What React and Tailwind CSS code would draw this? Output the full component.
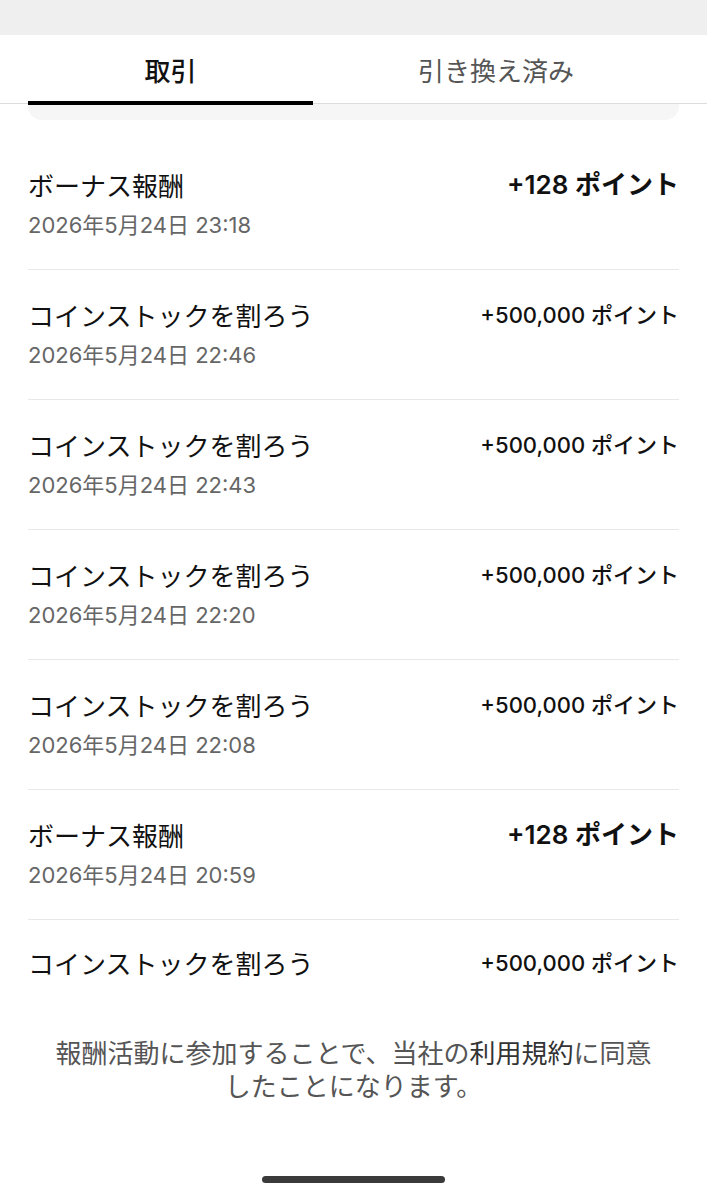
export default function App() {
  const rows = [
    { t: "ボーナス報酬", d: "2026年5月24日 23:18", a: "+128 ポイント", big: true },
    { t: "コインストックを割ろう", d: "2026年5月24日 22:46", a: "+500,000 ポイント" },
    { t: "コインストックを割ろう", d: "2026年5月24日 22:43", a: "+500,000 ポイント" },
    { t: "コインストックを割ろう", d: "2026年5月24日 22:20", a: "+500,000 ポイント" },
    { t: "コインストックを割ろう", d: "2026年5月24日 22:08", a: "+500,000 ポイント" },
    { t: "ボーナス報酬", d: "2026年5月24日 20:59", a: "+128 ポイント", big: true },
  ];
  const font = { fontFamily: '"Noto Sans CJK JP", "Noto Sans", sans-serif' };
  const num = { fontFamily: 'Inter, "Noto Sans CJK JP", sans-serif' };
  return (
    <div className="w-full min-h-[1200px] bg-white flex flex-col" style={font}>
      <div className="h-[35px] bg-[#efefef]" />
      <div className="flex h-[68px] px-[28px]">
        <div className="relative w-[285px] flex items-center justify-center text-[26px] font-medium text-[#111]">
          取引
          <span className="absolute left-0 right-0 bottom-[-2px] h-[4px] bg-black" />
        </div>
        <div className="flex-1 flex items-center justify-center text-[26px] text-[#555]">
          引き換え済み
        </div>
      </div>
      <div className="h-[1px] bg-[#dcdcdc]" />
      <div className="mx-[28px] h-[16px] bg-[#f6f6f6] rounded-b-[14px]" />
      <div className="px-[28px] mt-[20px] flex flex-col">
        {rows.map((r, i) => (
          <div key={i} className="h-[130px] border-b border-[#e8e8e8] flex justify-between pt-[30px]">
            <div className="flex flex-col">
              <div className="text-[26px] leading-[30px] text-[#111]">{r.t}</div>
              <div className="mt-[10px] text-[22px] leading-[30px] text-[#666]" style={num}>{r.d}</div>
            </div>
            <div
              style={num}
              className={
                r.big
                  ? "text-[26px] leading-[30px] font-semibold text-[#111]"
                  : "text-[22px] leading-[30px] font-medium text-[#111]"
              }
            >
              {r.a}
            </div>
          </div>
        ))}
        <div className="h-[100px] flex justify-between pt-[28px]">
          <div className="text-[26px] leading-[30px] text-[#111]">コインストックを割ろう</div>
          <div className="text-[22px] leading-[30px] font-medium text-[#111]" style={num}>+500,000 ポイント</div>
        </div>
      </div>
      <div className="pt-[17px] px-[30px] flex flex-col items-center text-[26px] text-[#555]" style={num}>
        <div className="leading-[33px]">
          報酬活動に参加することで、当社の<span className="text-[#333]">利用規約</span>に同意
        </div>
        <div className="leading-[33px]">したことになります。</div>
      </div>
      <div className="mt-[73px] flex justify-center">
        <div className="w-[183px] h-[7px] rounded-full bg-[#3a3a3a]" />
      </div>
    </div>
  );
}
